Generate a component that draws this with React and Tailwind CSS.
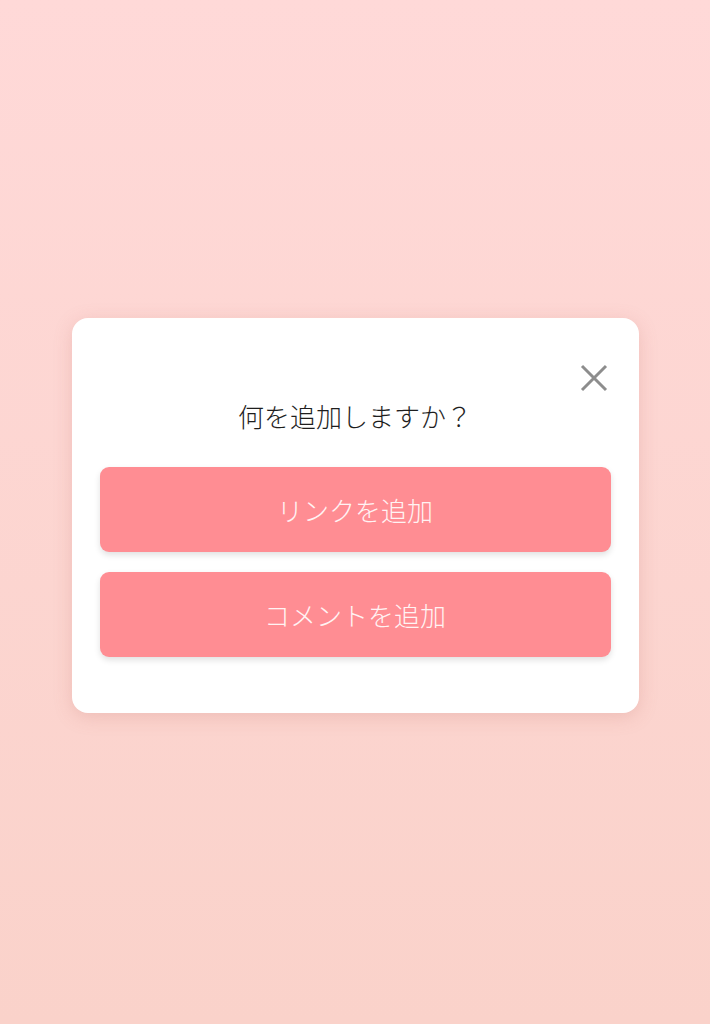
import React from "react";

export default function App() {
  return (
    <div
      className="w-[710px] h-[1024px] bg-gradient-to-b from-[#ffd9d8] to-[#fad2ca] flex justify-center pt-[318px]"
      style={{ fontFamily: '"Noto Sans CJK JP", "Noto Sans", sans-serif' }}
    >
      <div className="relative w-[567px] h-[395px] bg-white rounded-[16px] shadow-[0_4px_18px_rgba(200,120,110,0.25)] px-[28px] pt-[80px]">
        <button className="absolute right-[29px] top-[44px] w-[32px] h-[32px] flex items-center justify-center">
          <svg width="28" height="28" viewBox="0 0 28 28">
            <path d="M2 2 L26 26 M26 2 L2 26" stroke="#8d8d8d" strokeWidth="3" strokeLinecap="butt" />
          </svg>
        </button>
        <div className="text-center text-[26px] leading-[36px] font-light text-[#1e1e1e]">何を追加しますか？</div>
        <div className="mt-[33px] flex flex-col gap-[20px]">
          <button className="h-[85px] w-full rounded-[9px] bg-[#ff8d93] text-[26px] font-light text-[#fff3f3] shadow-[0_3px_6px_rgba(0,0,0,0.12)]">
            リンクを追加
          </button>
          <button className="h-[85px] w-full rounded-[9px] bg-[#ff8d93] text-[26px] font-light text-[#fff3f3] shadow-[0_3px_6px_rgba(0,0,0,0.12)]">
            コメントを追加
          </button>
        </div>
      </div>
    </div>
  );
}
